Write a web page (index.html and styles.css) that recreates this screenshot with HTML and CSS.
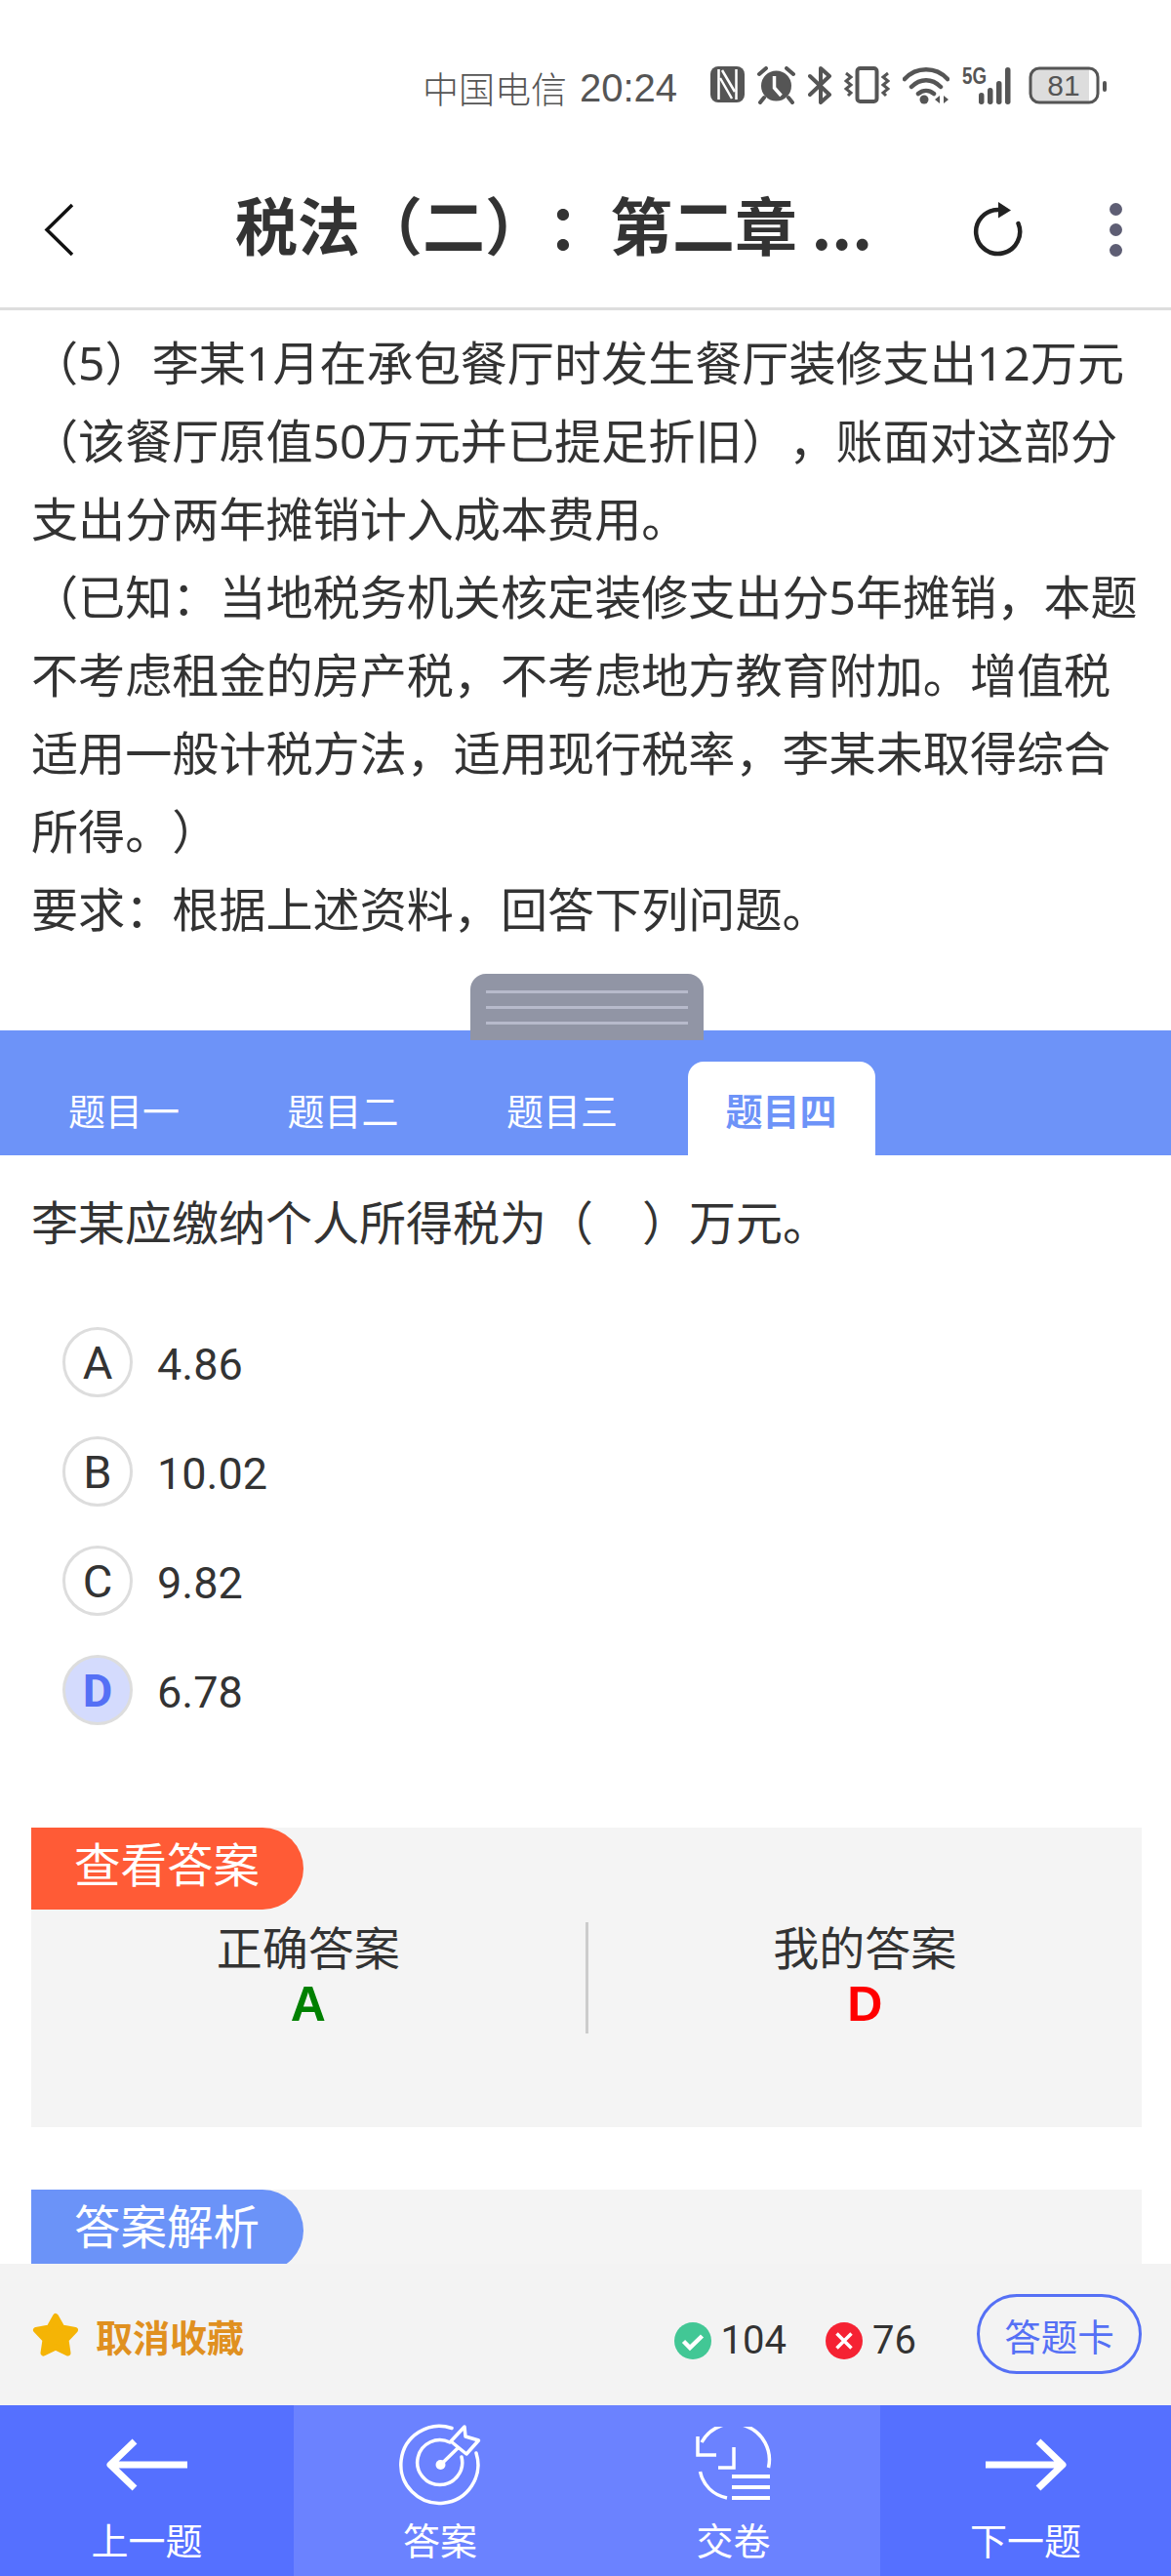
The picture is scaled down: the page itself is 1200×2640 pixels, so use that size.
FILE: index.html
```html
<!DOCTYPE html>
<html lang="zh-CN">
<head>
    <meta charset="UTF-8">
    <meta name="viewport" content="width=device-width, initial-scale=1.0">
    <title>税法（二）：第二章</title>
    <link rel="stylesheet" href="styles.css">
</head>
<body>

    <div class="status-bar">
        <span class="carrier">中国电信</span>
        <span class="clock">20:24</span>
        <svg class="ic-nfc" width="35" height="37" viewBox="0 0 35 37">
            <rect width="35" height="37" rx="8" fill="#555"/>
            <path d="M8.500 3v31M26.500 3v31" fill="none" stroke="#fff" stroke-width="2.500"/>
            <path d="M12 4l13 22M10 12l12 21" fill="none" stroke="#fff" stroke-width="2.500"/>
        </svg>
        <svg class="ic-alarm" width="39" height="39" viewBox="0 0 39 39">
            <circle cx="19.500" cy="20" r="15.500" fill="#555"/>
            <path d="M17.500 10v12l7 8" fill="none" stroke="#fff" stroke-width="3.500"/>
            <path d="M2 8l7-6M37 8l-7-6M7 32l-4 5M32 32l4 5" fill="none" stroke="#555" stroke-width="4" stroke-linecap="round"/>
        </svg>
        <svg class="ic-bt" width="25" height="39" viewBox="0 0 25 39">
            <path d="M2 10l20 19-9 8V2l9 8L2 29" fill="none" stroke="#555" stroke-width="4" stroke-linejoin="round" stroke-linecap="round"/>
        </svg>
        <svg class="ic-vibrate" width="47" height="38" viewBox="0 0 47 38">
            <rect x="13.500" y="2" width="20" height="34" rx="3" fill="none" stroke="#555" stroke-width="4"/>
            <path d="M2 7l5 4-5 4 5 4-5 4 5 4-3 3M45 7l-5 4 5 4-5 4 5 4-5 4 3 3" fill="none" stroke="#555" stroke-width="3"/>
        </svg>
        <svg class="ic-wifi" width="48" height="39" viewBox="0 0 48 39">
            <path d="M2 13C14 0 34 0 46 13M9 21c9-9 21-9 30 0M16 28c5-4 11-4 16 0" fill="none" stroke="#555" stroke-width="4.500" stroke-linecap="round"/>
            <circle cx="22" cy="34" r="4.500" fill="#555"/>
            <path d="M33 34l5-4v8zM42 30l5 4-5 4z" fill="#555"/>
        </svg>
        <svg class="ic-signal" width="56" height="45" viewBox="0 -6 56 45">
            <text class="five-g" x="0" y="18" textLength="25" lengthAdjust="spacingAndGlyphs">5G</text>
            <rect x="17" y="27" width="5.500" height="12" rx="2.700" fill="#555"/>
            <rect x="26" y="22" width="5.500" height="17" rx="2.700" fill="#555"/>
            <rect x="35" y="15" width="5.500" height="24" rx="2.700" fill="#555"/>
            <rect x="44" y="1" width="5.500" height="38" rx="2.700" fill="#555"/>
        </svg>
        <svg class="ic-battery" width="80" height="39" viewBox="0 0 80 39">
            <path d="M9 3h53v33H9a6 6 0 0 1-6-6V9a6 6 0 0 1 6-6z" fill="#ddd"/>
            <rect x="2" y="2" width="69" height="35" rx="9" fill="none" stroke="#555" stroke-width="3"/>
            <rect x="76" y="15" width="4" height="11" rx="2" fill="#555"/>
            <text class="batt-num" x="36" y="30">81</text>
        </svg>
    </div>

    <div class="top-bar">
        <svg class="back" width="31" height="55" viewBox="0 0 31 55">
            <path d="M29 2L3 27.500 29 53" fill="none" stroke="#111" stroke-width="3.500"/>
        </svg>
        <div class="top-title">税法（二）：第二章 ...</div>
        <svg class="refresh" width="54" height="60" viewBox="0 0 54 60">
            <path d="M27 10A22.500 22.500 0 1 0 47.500 24" fill="none" stroke="#222" stroke-width="4.500" stroke-linecap="round"/>
            <path d="M27 2l13 8.500-13 8z" fill="#222"/>
        </svg>
        <div class="more">
            <i></i><i></i><i></i>
        </div>
    </div>

    <div class="page">
        <div class="stem">
            <p>（5）李某1月在承包餐厅时发生餐厅装修支出12万元（该餐厅原值50万元并已提足折旧），账面对这部分支出分两年摊销计入成本费用。</p>
            <p>（已知：当地税务机关核定装修支出分5年摊销，本题不考虑租金的房产税，不考虑地方教育附加。增值税适用一般计税方法，适用现行税率，李某未取得综合所得。）</p>
            <p>要求：根据上述资料，回答下列问题。</p>
        </div>

        <div class="handle">
            <i></i><i></i><i></i>
        </div>

        <div class="tabs">
            <div class="tab">题目一</div>
            <div class="tab">题目二</div>
            <div class="tab">题目三</div>
            <div class="tab active">题目四</div>
        </div>

        <div class="question">李某应缴纳个人所得税为（&nbsp;&nbsp;&nbsp;&nbsp;）万元。</div>

        <div class="options">
            <div class="option"><span class="letter">A</span>4.86</div>
            <div class="option"><span class="letter">B</span>10.02</div>
            <div class="option"><span class="letter">C</span>9.82</div>
            <div class="option"><span class="letter picked">D</span>6.78</div>
        </div>

        <div class="card answer-card">
            <div class="badge orange">查看答案</div>
            <div class="answer-row">
                <div class="answer-col">
                    <div class="answer-label">正确答案</div>
                    <div class="answer-val right">A</div>
                </div>
                <div class="answer-col split">
                    <div class="answer-label">我的答案</div>
                    <div class="answer-val wrong">D</div>
                </div>
            </div>
        </div>

        <div class="card">
            <div class="badge blue">答案解析</div>
        </div>
    </div>

    <div class="tool-bar">
        <svg class="star" width="50" height="47" viewBox="0 0 50 47">
            <path d="M25 5l6.500 11.500L45 19l-9.500 10 2 13.500L25 36.500 12.500 42.500l2-13.500L5 19l13.500-2.500z" fill="#f5b405" stroke="#f5b405" stroke-width="6" stroke-linejoin="round"/>
        </svg>
        <div class="fav">取消收藏</div>
        <div class="stats">
            <svg width="38" height="38" viewBox="0 0 38 38">
                <circle cx="19" cy="19" r="19" fill="#42c795"/>
                <path d="M9.500 19.500l6.500 6.500L28.500 14" fill="none" stroke="#fff" stroke-width="4.500"/>
            </svg>
            <span class="stat-num">104</span>
            <svg class="stat-wrong" width="38" height="38" viewBox="0 0 38 38">
                <circle cx="19" cy="19" r="19" fill="#f52233"/>
                <path d="M11.500 11.500l15 15M26.500 11.500l-15 15" fill="none" stroke="#fff" stroke-width="3.500"/>
            </svg>
            <span class="stat-num">76</span>
        </div>
        <div class="sheet-btn">答题卡</div>
    </div>

    <div class="nav">
        <div class="nav-item">
            <div class="nav-icon">
                <svg width="84" height="54" viewBox="0 0 84 54">
                    <path d="M83 27H4M29 3L4 27l25 24" fill="none" stroke="#fff" stroke-width="7" stroke-linejoin="round"/>
                </svg>
            </div>
            <span>上一题</span>
        </div>
        <div class="nav-item light">
            <div class="nav-icon">
                <svg width="84" height="84" viewBox="0 0 84 84">
                    <path d="M54 4.500A39.500 39.500 0 1 0 79 30" fill="none" stroke="#fff" stroke-width="3.500" stroke-linecap="round"/>
                    <path d="M52 19A23 23 0 1 0 64 34" fill="none" stroke="#fff" stroke-width="3.500" stroke-linecap="round"/>
                    <circle cx="42.500" cy="42" r="5" fill="#fff"/>
                    <path d="M42.500 42L60 25M67 3L53 18l16 13 12.500-14L68 13z" fill="none" stroke="#fff" stroke-width="3.500" stroke-linejoin="round"/>
                </svg>
            </div>
            <span>答案</span>
        </div>
        <div class="nav-item light">
            <div class="nav-icon">
                <svg width="78" height="78" viewBox="0 0 78 78">
                    <path d="M6 16A37 37 0 0 1 74.500 42" fill="none" stroke="#fff" stroke-width="3.500"/>
                    <path d="M2 10v19h19M39 21v21H23" fill="none" stroke="#fff" stroke-width="3.500"/>
                    <path d="M4.500 46c3 14 13 24 27.500 27" fill="none" stroke="#fff" stroke-width="3.500"/>
                    <path d="M37 51h39M37 62h39M37 73h39" fill="none" stroke="#fff" stroke-width="4"/>
                </svg>
            </div>
            <span>交卷</span>
        </div>
        <div class="nav-item">
            <div class="nav-icon">
                <svg width="84" height="54" viewBox="0 0 84 54">
                    <path d="M1 27H80M55 3l25 24-25 24" fill="none" stroke="#fff" stroke-width="7" stroke-linejoin="round"/>
                </svg>
            </div>
            <span>下一题</span>
        </div>
    </div>

</body>
</html>
```

FILE: styles.css
```css
* {
    box-sizing: border-box;
}
body {
    margin: 0;
    height: 2640px;
    display: flex;
    flex-direction: column;
    overflow: hidden;
    background: #fff;
    color: #333;
    font-family: "Noto Sans", "Noto Sans CJK SC", sans-serif;
    text-spacing-trim: space-all;
}

/* status bar */
.status-bar {
    height: 150px;
    padding: 68px 66px 0 433px;
    display: flex;
    align-items: flex-start;
    flex-shrink: 0;
    color: #555;
}
.carrier {
    font-size: 37px;
    line-height: 44px;
    font-weight: 300;
    font-family: "Noto Sans CJK SC", sans-serif;
}
.clock {
    width: 134px;
    margin-left: 13px;
    font-size: 40px;
    line-height: 44px;
    font-family: "Liberation Sans Narrow", "Liberation Sans", sans-serif;
}
.ic-alarm {
    margin-left: 13px;
}
.ic-bt {
    margin-left: 13px;
}
.ic-vibrate {
    margin-left: 12px;
}
.ic-wifi {
    margin-left: 13px;
}
.ic-signal {
    margin: -6px 0 0 13px;
}
.ic-battery {
    margin-left: 12px;
}
.five-g {
    font: bold 23px "Liberation Sans Narrow", "Liberation Sans", sans-serif;
    fill: #555;
}
.batt-num {
    font: 30px "Liberation Sans Narrow", "Liberation Sans", sans-serif;
    fill: #555;
    text-anchor: middle;
}

/* title */
.top-bar {
    height: 168px;
    display: flex;
    align-items: center;
    flex-shrink: 0;
    border-bottom: 3px solid #ddd;
    padding: 5px 0 0 45px;
}
.top-title {
    width: 656px;
    margin: 0 0 14px 165px;
    font-size: 64px;
    font-weight: 700;
    white-space: nowrap;
    font-family: "Noto Sans CJK SC", sans-serif;
}
.refresh {
    margin-left: 99px;
}
.more {
    margin-left: 87px;
    display: flex;
    flex-direction: column;
    gap: 8px;
}
.more i {
    width: 13px;
    height: 13px;
    border-radius: 50%;
    background: #5e5e74;
}

/* page */
.page {
    flex: 1;
    overflow: hidden;
    min-height: 0;
}
.stem {
    padding: 14px 32px 0;
    font-size: 48.100px;
    line-height: 80px;
}
.stem p {
    margin: 0;
}
.handle {
    position: relative;
    width: 239px;
    height: 68px;
    margin: 26px 0 -10px 482px;
    padding: 17px 16px 0;
    display: flex;
    flex-direction: column;
    gap: 13px;
    background: #9195a5;
    border-radius: 16px 16px 0 0;
}
.handle i {
    height: 3px;
    background: #b7bacb;
}
.tabs {
    height: 128px;
    padding: 32px 0 0 31px;
    display: flex;
    gap: 32.500px;
    background: #6d93f8;
}
.tab {
    width: 192px;
    display: flex;
    align-items: center;
    justify-content: center;
    font-size: 38px;
    color: #fff;
    border-radius: 16px 16px 0 0;
}
.tab.active {
    background: #fff;
    color: #6d93f8;
    font-weight: 700;
}
.question {
    margin-top: 29px;
    padding-left: 32px;
    font-size: 48px;
    line-height: 80px;
}
.options {
    margin: 67px 0 105px 64px;
    display: flex;
    flex-direction: column;
    gap: 40px;
    font-family: Roboto, sans-serif;
}
.option {
    display: flex;
    align-items: flex-start;
    gap: 25px;
    font-size: 45px;
    line-height: 78px;
    height: 72px;
}
.letter {
    width: 72px;
    height: 72px;
    padding-top: 2px;
    display: flex;
    align-items: center;
    justify-content: center;
    border: 3px solid #ddd;
    border-radius: 50%;
    font-size: 47px;
    line-height: 60px;
}
.letter.picked {
    background: #d4dbfd;
    color: #5570f5;
    font-weight: 700;
}
.card {
    margin: 0 30px 64px 32px;
    background: #f4f4f4;
}
.answer-card {
    height: 307px;
}
.badge {
    width: 279px;
    height: 84px;
    padding: 0 0 13px 44px;
    display: flex;
    align-items: center;
    font-size: 47.500px;
    color: #fff;
    border-radius: 0 42px 42px 0;
}
.badge.orange {
    background: #ff5b36;
}
.badge.blue {
    background: #6b93f8;
}
.answer-row {
    margin-top: 13px;
    display: flex;
}
.answer-col {
    flex: 1;
    text-align: center;
}
.answer-col.split {
    border-left: 3px solid #ccc;
}
.answer-label {
    font-size: 47px;
    line-height: 52px;
    height: 54px;
}
.answer-val {
    font-family: "Liberation Sans", sans-serif;
    font-size: 50px;
    line-height: 60px;
    font-weight: 700;
}
.right {
    color: #008000;
}
.wrong {
    color: #f00;
}

/* bottom bars */
.tool-bar {
    height: 145px;
    padding: 31px 30px 0 32px;
    display: flex;
    align-items: flex-start;
    flex-shrink: 0;
    background: #f3f3f3;
}
.star {
    margin-top: 18px;
}
.fav {
    margin: 15px 0 0 16px;
    font-size: 38px;
    line-height: 56px;
    font-weight: 700;
    color: #e09020;
    font-family: "Noto Sans CJK SC", sans-serif;
}
.stats {
    margin: 29px 0 0 auto;
    display: flex;
    align-items: center;
    gap: 10px;
    font-family: Roboto, sans-serif;
    font-size: 40px;
    line-height: 38px;
}
.stat-wrong {
    margin-left: 30px;
}
.sheet-btn {
    width: 169px;
    height: 82px;
    margin-left: 62px;
    display: flex;
    align-items: center;
    justify-content: center;
    border: 3px solid #5570f5;
    border-radius: 41px;
    font-size: 37.500px;
    color: #5570f5;
}
.nav {
    height: 175px;
    display: grid;
    grid-template-columns: 301px 300px 301px 298px;
    flex-shrink: 0;
    background: #5570ff;
}
.nav-item {
    padding-top: 19px;
    display: flex;
    flex-direction: column;
    align-items: center;
    font-size: 38px;
    line-height: 56px;
    color: #fff;
}
.nav-icon {
    height: 84px;
    margin-bottom: 7px;
    display: flex;
    align-items: center;
}
.nav-item.light {
    background: #6b82ff;
}
```
